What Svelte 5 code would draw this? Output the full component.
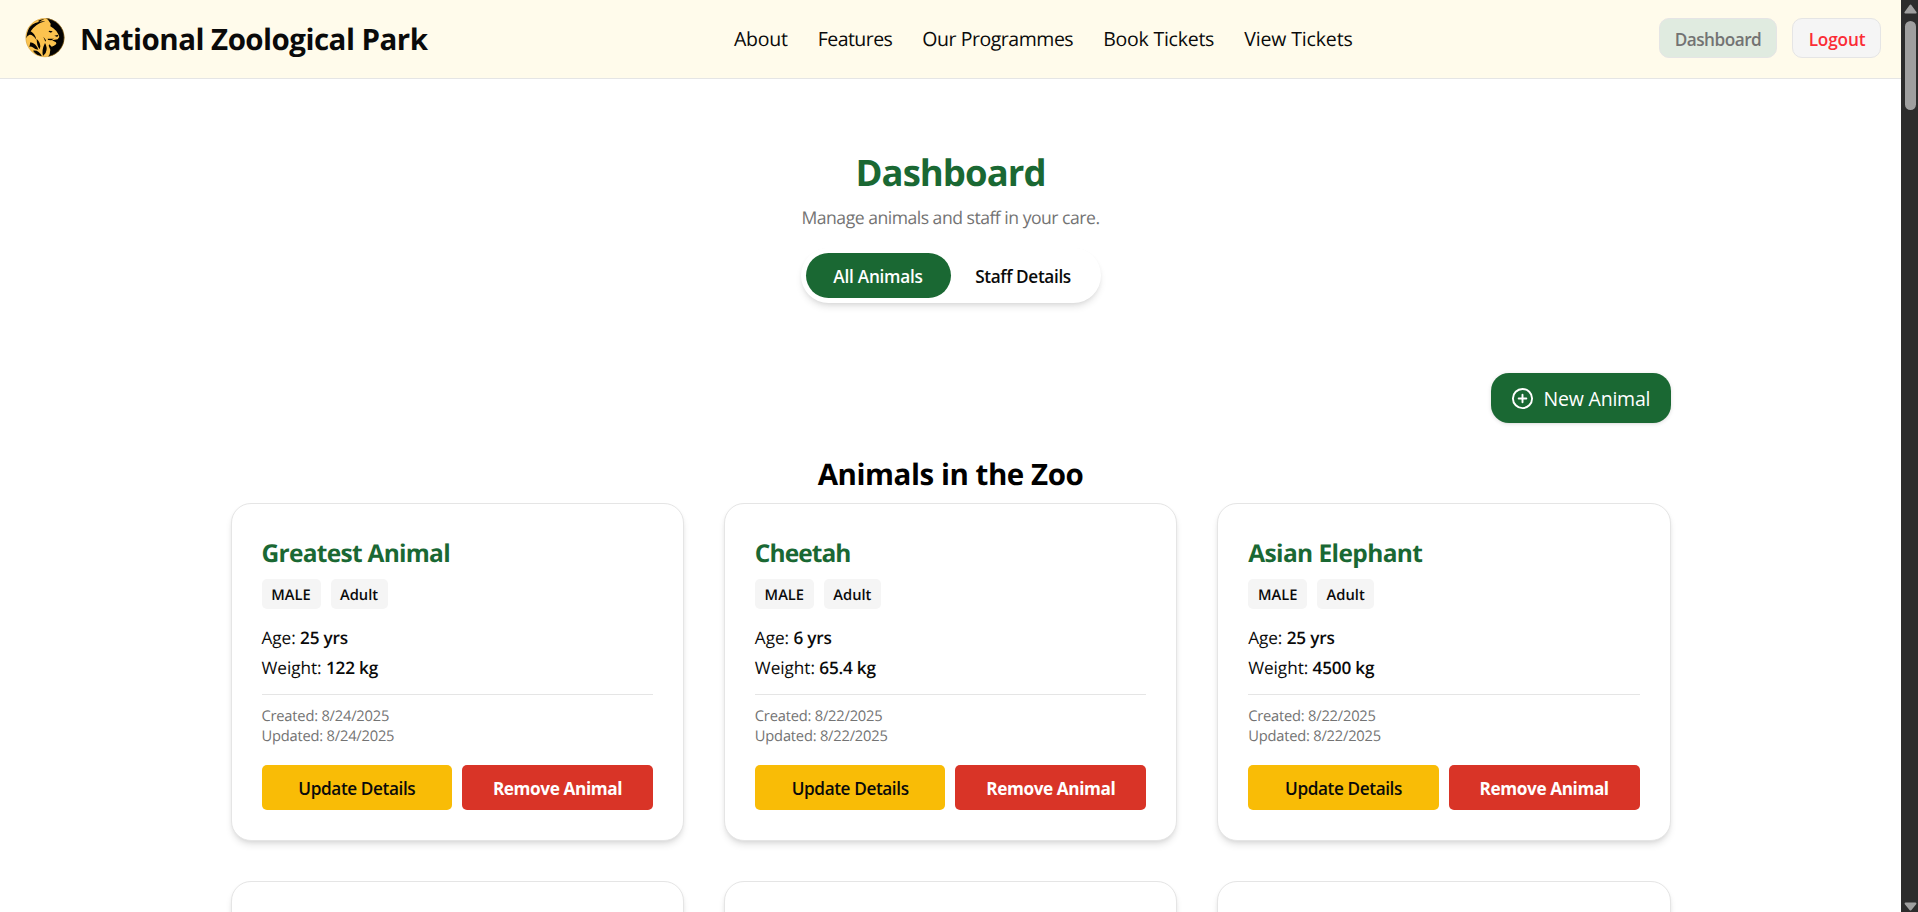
<script>
  const links = [
    { label: 'About', track: -0.2 },
    { label: 'Features', track: -0.56 },
    { label: 'Our Programmes', track: -0.46 },
    { label: 'Book Tickets', track: -0.24 },
    { label: 'View Tickets', track: -0.14 }
  ];

  const animals = [
    { name: 'Greatest Animal', track: -0.72, sex: 'MALE', stage: 'Adult', age: '25', weight: '122', created: '8/24/2025', updated: '8/24/2025' },
    { name: 'Cheetah', track: -0.95, sex: 'MALE', stage: 'Adult', age: '6', weight: '65.4', created: '8/22/2025', updated: '8/22/2025' },
    { name: 'Asian Elephant', track: -0.6, sex: 'MALE', stage: 'Adult', age: '25', weight: '4500', created: '8/22/2025', updated: '8/22/2025' }
  ];

  let tab = $state('animals');
</script>

<div class="window">
  <div class="page">
    <header>
      <div class="brand">
        <svg class="logo" viewBox="0 0 126 126" aria-hidden="true">
          <defs>
            <clipPath id="disc"><circle cx="63" cy="62" r="58" /></clipPath>
          </defs>
          <g clip-path="url(#disc)">
            <rect width="126" height="126" fill="#fcc34f" />
            <path fill="#050402" d="M60 0 L72 8 L80 20 L79 28 L88 34 L97 42 L103 52 L106 60 L101 67 L84 70 L96 76 L97 81 L90 86 L83 89 L76 82 L74 86 L79 98 L77 112 L69 124 L126 126 L126 0Z" />
            <path fill="#050402" d="M10 46 Q15 26 34 18 Q50 11 64 13 Q48 17 38 24 Q27 32 20 43 Q33 50 37 68 Q26 52 17 53 Q10 55 6 64Z" />
            <path fill="#050402" d="M42 12 Q51 5 61 7 Q51 10 46 15Z" />
            <path fill="#050402" d="M38 66 Q48 74 49 88 L47 97 Q38 86 38 66Z M19 76 Q36 79 43 98 Q33 98 26 91 Q20 87 16 90Z M63 78 Q72 92 65 108 L57 117 Q52 100 63 78Z M27 101 Q44 98 54 118 Q37 116 27 101Z" />
            <path fill="#050402" d="M75 41 L86 43 L81 47 L74 44Z M91 56 L103 53 L100 60Z M71 65 L90 65 L82 70 L72 69Z M58 59 L66 70 L64 74Z" />
          </g>
          <circle cx="63" cy="62" r="57.5" fill="none" stroke="#c79a45" stroke-width="1.5" />
        </svg>
        <span class="brand-name">National Zoological Park</span>
      </div>
      <nav>
        {#each links as link}
          <a href="#top" style:letter-spacing="{link.track}px">{link.label}</a>
        {/each}
      </nav>
      <div class="account">
        <button class="dash">Dashboard</button>
        <button class="logout">Logout</button>
      </div>
    </header>

    <main>
      <section class="intro">
        <h1>Dashboard</h1>
        <p>Manage animals and staff in your care.</p>
        <div class="tabs">
          <button class:active={tab === 'animals'} onclick={() => (tab = 'animals')}>All Animals</button>
          <button class="staff" class:active={tab === 'staff'} onclick={() => (tab = 'staff')}>Staff Details</button>
        </div>
      </section>

      <div class="toolbar">
        <button class="new">
          <svg viewBox="0 0 24 24" aria-hidden="true">
            <circle cx="12" cy="12" r="10" />
            <path d="M8 12h8M12 8v8" />
          </svg>
          <span>New Animal</span>
        </button>
      </div>

      <h2>Animals in the Zoo</h2>

      <div class="grid">
        {#each animals as a}
          <article>
            <h3 style:letter-spacing="{a.track}px">{a.name}</h3>
            <div class="tags"><span class="sex">{a.sex}</span><span class="stage">{a.stage}</span></div>
            <p class="fact">Age: <b>{a.age} yrs</b></p>
            <p class="fact">Weight: <b>{a.weight} kg</b></p>
            <div class="dates">
              <p>Created: {a.created}</p>
              <p>Updated: {a.updated}</p>
            </div>
            <div class="actions">
              <button class="update">Update Details</button>
              <button class="remove">Remove Animal</button>
            </div>
          </article>
        {/each}
        {#each animals as _}
          <article class="next"></article>
        {/each}
      </div>
    </main>
  </div>

  <div class="scrollbar">
    <svg viewBox="0 0 17 21"><path d="M8.5 5.5 L13.6 12.6 H3.4Z" /></svg>
    <div class="thumb"></div>
    <svg class="down" viewBox="0 0 17 21"><path d="M8.5 18.5 L13.4 12.6 H3.6Z" /></svg>
  </div>
</div>

<style>
  :global(body) {
    margin: 0;
    overflow: hidden;
    background: #fff;
  }
  * {
    box-sizing: border-box;
  }
  .window {
    display: flex;
    width: 1918px;
    height: 912px;
    overflow: hidden;
    font-family: 'Open Sans', 'Noto Sans', sans-serif;
    color: #0a0a0a;
    text-rendering: geometricPrecision;
  }
  h1, h2, h3, p {
    margin: 0;
  }
  button {
    font: inherit;
    letter-spacing: inherit;
    border: 0;
    margin: 0;
    padding: 0;
    color: inherit;
    white-space: nowrap;
    cursor: pointer;
  }
  .page {
    width: 1901px;
    height: 912px;
    overflow: hidden;
  }
  header {
    display: flex;
    align-items: center;
    justify-content: space-between;
    height: 79px;
    padding: 0 20px 2px 24px;
    background: #fffbeb;
    border-bottom: 1px solid #e5e5e5;
  }
  .brand {
    display: flex;
    align-items: center;
    gap: 14px;
  }
  .logo {
    width: 42px;
    height: 42px;
  }
  .brand-name {
    font-size: 29.5px;
    font-weight: 700;
    letter-spacing: -0.52px;
    line-height: 40px;
    padding-top: 2px;
  }
  nav {
    display: flex;
    gap: 30px;
    padding-top: 2px;
  }
  nav a {
    color: inherit;
    text-decoration: none;
    font-size: 19.5px;
    line-height: 30px;
    white-space: nowrap;
  }
  .account {
    display: flex;
    gap: 15px;
  }
  .account button {
    height: 40px;
    padding-top: 2px;
    border: 1px solid #e5e5e5;
    border-radius: 10px;
    font-size: 17.2px;
    font-weight: 600;
  }
  .account .dash {
    width: 118px;
    background: #e0ebe0;
    color: #737373;
    letter-spacing: -0.5px;
  }
  .account .logout {
    width: 89px;
    padding-left: 1px;
    background: #f5f5f5;
    color: #fb2c36;
    letter-spacing: -0.15px;
  }
  main {
    width: 1440px;
    margin: 0 auto;
    padding-top: 70px;
  }
  .intro {
    display: flex;
    flex-direction: column;
    align-items: center;
  }
  h1 {
    color: #1a6833;
    font-size: 36.5px;
    font-weight: 700;
    letter-spacing: -0.95px;
    line-height: 47px;
  }
  .intro p {
    margin-top: 7px;
    color: #737373;
    font-size: 17.6px;
    letter-spacing: -0.5px;
    line-height: 30px;
  }
  .tabs {
    display: grid;
    grid-template-columns: 145px 145px;
    width: 300px;
    height: 55px;
    margin-top: 15px;
    padding: 5px;
    border-radius: 28px;
    background: #fff;
    box-shadow: 0 5px 7px -1px rgba(0, 0, 0, 0.1), 0 2px 5px -2px rgba(0, 0, 0, 0.1);
  }
  .tabs button {
    padding-top: 2px;
    border-radius: 23px;
    background: transparent;
    font-size: 17.2px;
    font-weight: 600;
    letter-spacing: -0.25px;
  }
  .tabs .staff {
    letter-spacing: -0.36px;
  }
  .tabs .active {
    background: #1a6833;
    color: #fff;
  }
  .toolbar {
    display: flex;
    justify-content: flex-end;
    margin-top: 70px;
  }
  .new {
    display: flex;
    align-items: center;
    gap: 10px;
    width: 180px;
    height: 50px;
    padding-left: 20px;
    border-radius: 18px;
    background: #1a6833;
    color: #fff;
    font-size: 19.5px;
    letter-spacing: -0.2px;
    box-shadow: 0 1px 4px rgba(0, 0, 0, 0.12), 0 1px 2px -1px rgba(0, 0, 0, 0.1);
  }
  .new svg {
    width: 23px;
    height: 23px;
    fill: none;
    stroke: currentColor;
    stroke-width: 2;
    stroke-linecap: round;
  }
  h2 {
    margin-top: 30px;
    color: #000;
    font-size: 29.5px;
    font-weight: 700;
    letter-spacing: -0.46px;
    line-height: 42px;
    text-align: center;
  }
  .grid {
    display: grid;
    grid-template-columns: repeat(3, 1fr);
    gap: 40px;
    margin-top: 8px;
  }
  article {
    height: 338px;
    padding: 30px;
    border: 1px solid #e5e5e5;
    border-radius: 20px;
    background: #fff;
    box-shadow: 0 5px 7px -1px rgba(0, 0, 0, 0.1), 0 2px 5px -2px rgba(0, 0, 0, 0.1);
  }
  h3 {
    padding-top: 2px;
    color: #1a6833;
    font-size: 24.5px;
    font-weight: 700;
    line-height: 35px;
  }
  .tags {
    display: flex;
    gap: 10px;
    margin: 8px 0 15px;
  }
  .tags span {
    height: 30px;
    padding-top: 1px;
    border-radius: 5px;
    background: #f5f5f5;
    font-size: 14.7px;
    font-weight: 600;
    line-height: 31px;
    text-align: center;
  }
  .tags .sex {
    width: 59px;
  }
  .tags .stage {
    width: 57px;
  }
  .fact {
    font-size: 17.2px;
    line-height: 30px;
    letter-spacing: -0.05px;
  }
  .fact b {
    font-weight: 600;
    letter-spacing: -0.22px;
  }
  .dates {
    margin-top: 10px;
    padding-top: 11px;
    border-top: 1px solid #e5e5e5;
    color: #737373;
    font-size: 14.7px;
    letter-spacing: -0.21px;
    line-height: 20px;
  }
  .actions {
    display: grid;
    grid-template-columns: 1fr 1fr;
    gap: 10px;
    margin-top: 19px;
  }
  .actions button {
    height: 45px;
    padding-top: 2px;
    border-radius: 5px;
    font-size: 17.2px;
  }
  .actions .update {
    background: #f9bc06;
    font-weight: 600;
    letter-spacing: -0.4px;
  }
  .actions .remove {
    background: #d93427;
    color: #fff;
    font-weight: 700;
    letter-spacing: -0.4px;
  }
  .scrollbar {
    display: flex;
    flex-direction: column;
    align-items: center;
    width: 17px;
    height: 912px;
    padding-left: 1px;
    background: #2c2c2c;
  }
  .scrollbar svg {
    width: 17px;
    height: 21px;
  }
  .scrollbar path {
    fill: #9f9f9f;
    stroke: #9f9f9f;
    stroke-width: 2;
    stroke-linejoin: round;
  }
  .scrollbar .down {
    margin-top: auto;
    margin-bottom: -18px;
    transform: translateY(-18px);
  }
  .thumb {
    width: 11px;
    height: 89px;
    border-radius: 6px;
    background: #9f9f9f;
  }
</style>
